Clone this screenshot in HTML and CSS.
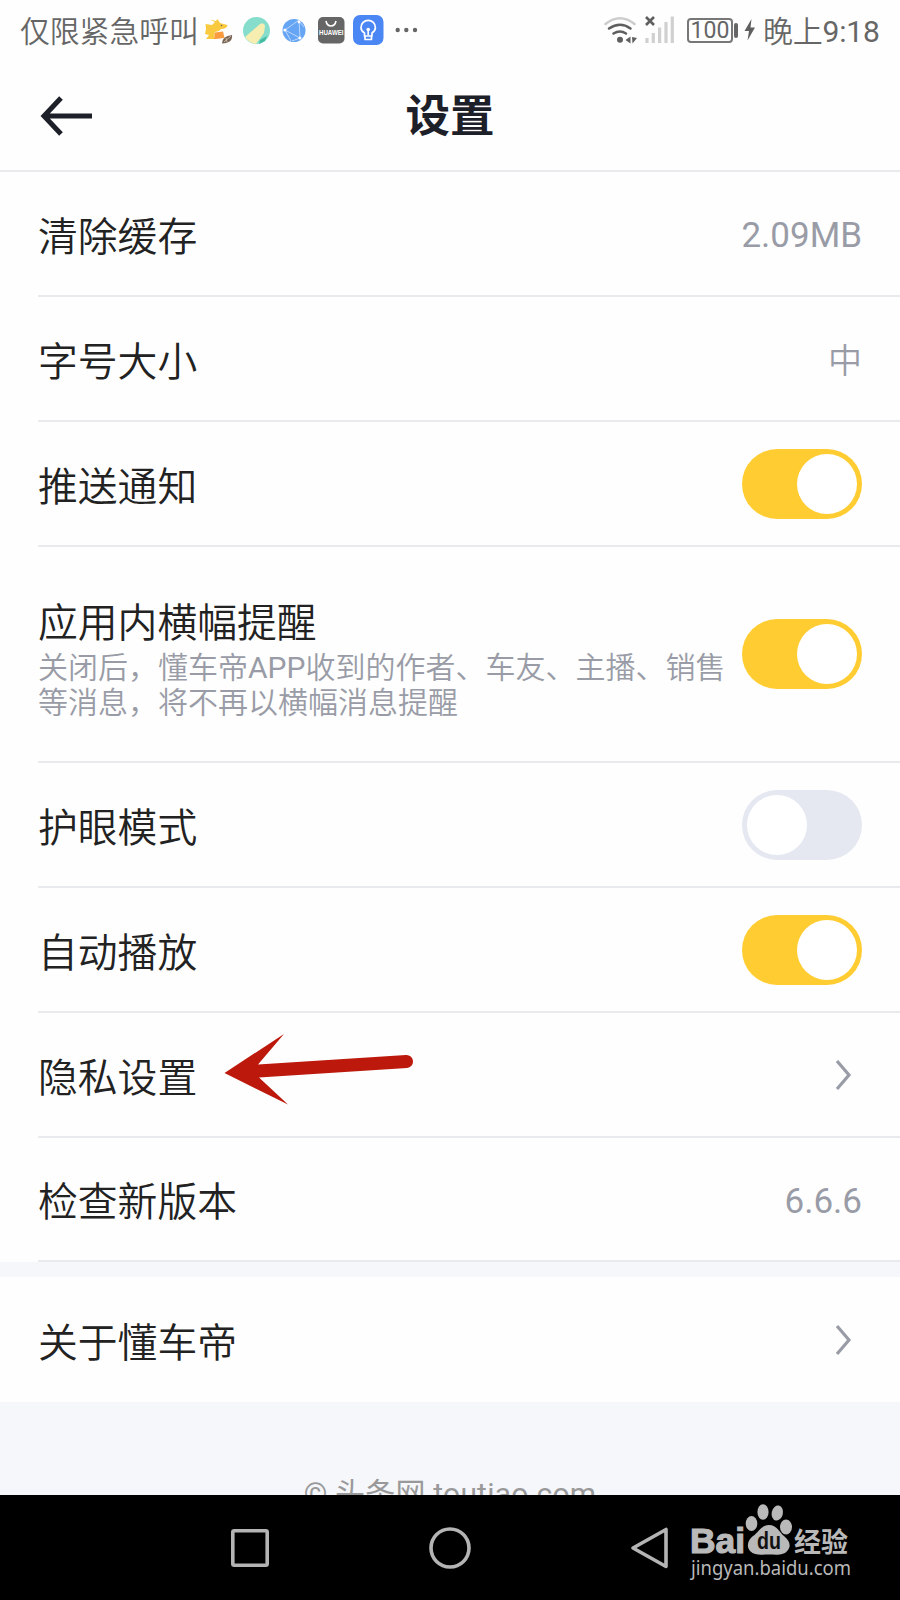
FILE: index.html
```html
<!DOCTYPE html>
<html lang="zh-CN">
<head>
  <meta charset="UTF-8" />
  <meta name="viewport" content="width=device-width, initial-scale=1.0"/>
  <title>设置</title>
  <link rel="stylesheet" href="styles.css">
</head>
<body>
  <div class="status-bar">
    <span class="carrier">仅限紧急呼叫</span>
    <!-- notification icons -->
    <svg class="notifications" width="216" height="32" viewBox="203 14 216 32">
      <!-- fox -->
      <path d="M205.5 24L212 25L215 22L209.5 19.5L216 21L217.5 19L220 23L227.5 25Q227 29 221 29L219 31L215 32L214 38L221 39H206L209 35L205 34L206 29Z" fill="#f9ca3f"/>
      <circle cx="221.5" cy="25.5" r="0.8" fill="#776455"/>
      <path d="M215 32.5L223 31.5L224.5 38L214 39Z" fill="#f99b3e"/>
      <path d="M222 43.5Q222 36 232 35Q233 43 222 43.5Z" fill="#776455"/>
      <path d="M224 42L231 36M226 38L227 42" stroke="#c9b9a6" stroke-width="1"/>
      <!-- green circle with pen -->
      <circle cx="256.5" cy="30.5" r="13.5" fill="#86ddcb"/>
      <path d="M245 37L260 24Q264 22 265 26L264 33L256 44Q249 43 245 37Z" fill="#f6edb0"/>
      <path d="M260 40L267 36L265 41L259 44Z" fill="#45bba3"/>
      <!-- globe -->
      <circle cx="294" cy="30.5" r="11.5" fill="#65a5f4"/>
      <path d="M299 20L285 30L300 38L299 20M285 30L291 41M300 38L292 41M282 31L285 30M299 21L304 27" fill="none" stroke="#b9d7fd" stroke-width="1"/>
      <circle cx="285" cy="30" r="1.5" fill="#fff"/>
      <circle cx="300" cy="38" r="1.5" fill="#fff"/>
      <circle cx="299" cy="22" r="1.4" fill="#fff"/>
      <!-- app store bag -->
      <rect x="318" y="17" width="26.5" height="26.5" rx="5" fill="#666"/>
      <path d="M326 21Q327 26 331 26Q335 26 336 21" fill="none" stroke="#fff" stroke-width="1.6"/>
      <text x="319" y="35" class="bag-text" textLength="24.5" lengthAdjust="spacingAndGlyphs">HUAWEI</text>
      <!-- bulb -->
      <rect x="353" y="15" width="30.5" height="30" rx="7" fill="#4b86f5"/>
      <path d="M364.5 36V33Q361 31 361 27.5A7.2 7.2 0 0 1 375.4 27.5Q375.4 31 372 33V36ZM365 36V39.5H371.5V36M368.2 35V30" fill="none" stroke="#fff" stroke-width="1.7" stroke-linejoin="round"/>
      <circle cx="368.2" cy="29.5" r="1.8" fill="#fff"/>
      <!-- more -->
      <circle cx="397.7" cy="30" r="2.2" fill="#666"/>
      <circle cx="406.3" cy="30" r="2.2" fill="#666"/>
      <circle cx="415" cy="30" r="2.2" fill="#666"/>
    </svg>
    <svg class="signals" width="74" height="32" viewBox="602 14 74 32">
      <g fill="none" stroke-linecap="round">
        <path d="M605.5 24Q620 12.5 634.5 24" stroke="#ccc" stroke-width="2.5"/>
        <path d="M609 28.5Q620 21 630.5 28.5" stroke="#5f5f5f" stroke-width="2.5"/>
        <path d="M613.5 33.5Q620 29.5 626 33.5" stroke="#5f5f5f" stroke-width="2.5"/>
      </g>
      <circle cx="620" cy="39.8" r="3" fill="#5f5f5f"/>
      <path d="M625.5 40L630.5 36.5V43.5ZM632 37L637 38L632.5 43.5Z" fill="#5f5f5f"/>
      <path d="M646 17L654 25M654 17L646 25" stroke="#5f5f5f" stroke-width="2.6"/>
      <path d="M647 38V43M653.3 33V43M659.6 27.5V43M666 22V43M672.3 16.5V43" stroke="#d0d0d0" stroke-width="3.2"/>
    </svg>
    <span class="battery">100</span>
    <svg class="bolt" width="12" height="24" viewBox="0 0 12 24">
      <path d="M7.5 1L0.5 13H5L3.5 22.5L11 9.5H6.5Z" fill="#5f5f5f"/>
    </svg>
    <span class="clock">晚上<span class="latin">9:18</span></span>
  </div>

  <div class="header">
    <svg class="back" width="54" height="42" viewBox="0 0 54 42">
      <path d="M21 3L4 21L21 39M3 21H52" fill="none" stroke="#1d2028" stroke-width="5"/>
    </svg>
    <h1>设置</h1>
  </div>

  <div class="list">
    <div class="row">
      <span class="label">清除缓存</span>
      <span class="value">2.09MB</span>
    </div>
    <div class="row">
      <span class="label">字号大小</span>
      <span class="value size">中</span>
    </div>
    <div class="row">
      <span class="label">推送通知</span>
      <span class="toggle on"></span>
    </div>
    <div class="row tall">
      <div class="text">
        <span class="label">应用内横幅提醒</span>
        <p class="desc">关闭后，懂车帝<span class="latin">APP</span>收到的作者、车友、主播、销售<br>等消息，将不再以横幅消息提醒</p>
      </div>
      <span class="toggle on"></span>
    </div>
    <div class="row">
      <span class="label">护眼模式</span>
      <span class="toggle"></span>
    </div>
    <div class="row">
      <span class="label">自动播放</span>
      <span class="toggle on"></span>
    </div>
    <div class="row">
      <span class="label">隐私设置</span>
      <svg class="chevron" width="18" height="34" viewBox="0 0 18 34">
        <path d="M3 3L15 17L3 31" fill="none" stroke="#999ca6" stroke-width="3.2"/>
      </svg>
      <!-- red pointer arrow -->
      <svg class="pointer" width="192" height="74" viewBox="223 1032 192 74">
        <path d="M224.5 1073L284 1034L258 1064.5L406 1055A6.5 6.5 0 0 1 407 1068L259 1077.5L288 1104.5Z" fill="#bc180b"/>
      </svg>
    </div>
    <div class="row last">
      <span class="label">检查新版本</span>
      <span class="value">6.6.6</span>
    </div>
  </div>

  <div class="list second">
    <div class="row about">
      <span class="label">关于懂车帝</span>
      <svg class="chevron" width="18" height="34" viewBox="0 0 18 34">
        <path d="M3 3L15 17L3 31" fill="none" stroke="#999ca6" stroke-width="3.2"/>
      </svg>
    </div>
  </div>

  <div class="footer">© 头条网 toutiao.com</div>

  <div class="nav-bar">
    <svg width="42" height="42" viewBox="0 0 42 42">
      <rect x="3.8" y="3.8" width="34.4" height="34.4" rx="1.5" fill="none" stroke="#b4b4b4" stroke-width="3.6"/>
    </svg>
    <svg width="42" height="42" viewBox="0 0 42 42">
      <circle cx="21" cy="21" r="19" fill="none" stroke="#b4b4b4" stroke-width="3.6"/>
    </svg>
    <svg width="42" height="42" viewBox="0 0 42 42">
      <path d="M4 21L37 2.5V39.5Z" fill="none" stroke="#b4b4b4" stroke-width="3.6" stroke-linejoin="round"/>
    </svg>
    <svg class="watermark" width="170" height="92" viewBox="686 1500 170 92">
      <g fill="#b9b9b9">
        <text x="690" y="1553" class="wm-bai" textLength="55" lengthAdjust="spacingAndGlyphs">Bai</text>
        <ellipse cx="751.5" cy="1523.5" rx="5.8" ry="7.6"/>
        <ellipse cx="763" cy="1512" rx="5.6" ry="7.8"/>
        <ellipse cx="777.3" cy="1513" rx="5.6" ry="7.6" transform="rotate(12 777.3 1513)"/>
        <ellipse cx="786" cy="1527" rx="6" ry="7.4"/>
        <path d="M769 1525C777 1525 779 1532 784 1536C790 1541 791 1546 788 1550C784 1556 776 1554.5 769 1554.5C762 1554.5 755 1556 750 1551C746 1546 748 1540 753 1536C759 1532 761 1525 769 1525Z"/>
        <text x="794" y="1552" class="wm-cn" textLength="54" lengthAdjust="spacingAndGlyphs">经验</text>
        <text x="691" y="1575" class="wm-url" textLength="160" lengthAdjust="spacingAndGlyphs">jingyan.baidu.com</text>
      </g>
      <text x="757" y="1549" class="wm-du" textLength="24" lengthAdjust="spacingAndGlyphs">du</text>
    </svg>
  </div>
</body>
</html>
```
FILE: styles.css
```css
* {
  box-sizing: border-box;
}

body {
  margin: 0;
  height: 1600px;
  display: flex;
  flex-direction: column;
  overflow: hidden;
  background: #f6f7fb;
  font-family: Roboto, "Noto Sans CJK SC", sans-serif;
}

svg {
  flex-shrink: 0;
}

.latin {   /* keeps latin text at regular weight */
  font-weight: 400;
}

/* STATUS BAR */
.status-bar {
  height: 60px;
  padding: 0 20px;
  display: flex;
  align-items: center;
  background: #fefefe;
  color: #666;
  font-size: 30px;
  line-height: 60px;
  white-space: nowrap;
}
.carrier {
  width: 183px;
  padding-top: 3px;
  font-size: 29.8px;
  font-weight: 350;
}
.notifications {
  margin-right: auto;
}
.battery {
  position: relative;
  width: 46px;
  height: 25px;
  margin: 1px 0 0 11px;
  border: 2px solid #777;
  border-radius: 4px;
  font-size: 23px;
  line-height: 22px;
  text-align: center;
}
.battery::after {   /* battery cap */
  content: "";
  position: absolute;
  left: 45px;
  top: 3px;
  width: 4px;
  height: 15px;
  border-radius: 2px;
  background: #666;
}
.bolt {
  margin: 0 7px 0 11px;
}
.clock {
  width: 117px;
  padding-top: 3px;
  font-weight: 350;
  letter-spacing: -0.2px;
}
.bag-text {
  font: bold 6.5px "Liberation Sans", sans-serif;
  fill: #fff;
}

/* TITLE */
.header {
  height: 112px;
  padding: 0 41px;
  display: flex;
  align-items: center;
  background: #fefefe;
  border-bottom: 2px solid #e8eaec;
}
.back {
  margin: 1px 0 0 -1px;
}
h1 {
  flex: 1;
  margin: 4px 53px 0 0;
  color: #1d2028;
  font-size: 44.5px;
  line-height: 60px;
  text-align: center;
}

/* SETTINGS LIST */
.list {
  padding-left: 38px;
  background: #fefefe;
}
.second {
  margin-top: 15px;
}
.row {
  position: relative;
  height: 125px;
  padding-right: 38px;
  display: flex;
  align-items: center;
  justify-content: space-between;
  border-bottom: 2px solid #e8eaed;
}
.tall {
  height: 216px;
}
.last {
  height: 124px;
}
.about {
  border-bottom: 0;
}
.label {
  display: block;
  padding-top: 8px;
  color: #222;
  font-size: 39.8px;
  font-weight: 350;
  line-height: 52px;
}
.text {
  padding-top: 1px;
}
.desc {
  margin: 0;
  color: #999ca6;
  font-size: 30px;
  font-weight: 350;
  line-height: 35px;
  white-space: nowrap;
}
.value {
  padding-top: 4px;
  color: #999ca6;
  font-size: 35px;
}
.size {
  padding-top: 0;
  font-size: 34px;
  font-weight: 350;
}
.toggle {
  width: 120px;
  height: 70px;
  padding: 5px;
  flex-shrink: 0;
  display: flex;
  border-radius: 35px;
  background: #e5e8f1;
}
.toggle::before {
  content: "";
  width: 60px;
  height: 60px;
  border-radius: 50%;
  background: #fff;
}
.on {
  justify-content: flex-end;
  background: #ffcc32;
}
.chevron {
  margin-right: 10px;
}
.pointer {
  position: absolute;
  left: 185px;
  top: 19px;
}

.footer {
  height: 93px;
  padding-top: 72px;
  overflow: hidden;
  color: #999;
  font-size: 30px;
  line-height: 40px;
  letter-spacing: 0.2px;
  text-align: center;
}

/* SYSTEM NAVIGATION */
.nav-bar {
  position: relative;
  height: 105px;
  padding: 0 229px;
  display: flex;
  align-items: center;
  justify-content: space-between;
  background: #000;
}
.watermark {
  position: absolute;
  left: 686px;
  top: 5px;
}
.wm-bai {
  font: bold 35px "Liberation Sans", sans-serif;
  stroke: #b9b9b9;
  stroke-width: 1.2px;
}
.wm-cn {
  font: bold 27px "Noto Sans CJK SC", sans-serif;
}
.wm-url {
  font: 20px "Noto Sans", sans-serif;
}
.wm-du {
  font: bold 23px "Liberation Sans", sans-serif;
  fill: #111;
}
```
